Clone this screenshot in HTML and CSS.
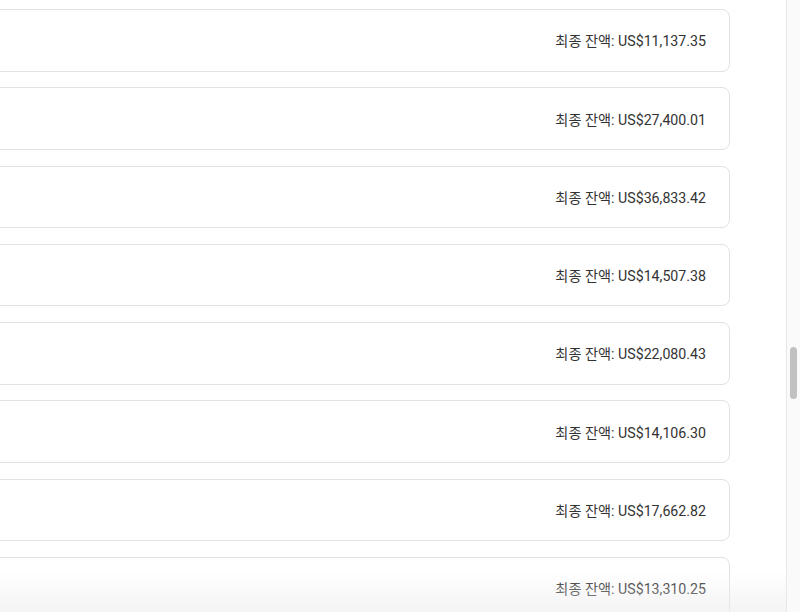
FILE: index.html
```html
<!DOCTYPE html>
<html lang="ko">
<head>
    <meta charset="UTF-8">
    <meta name="viewport" content="width=device-width, initial-scale=1.0">
    <title>최종 잔액</title>
    <link rel="stylesheet" href="styles.css">
</head>
<body>
    <div class="list">
        <div class="card"><span class="balance">최종 잔액: US$11,137.35</span></div>
        <div class="card"><span class="balance">최종 잔액: US$27,400.01</span></div>
        <div class="card"><span class="balance">최종 잔액: US$36,833.42</span></div>
        <div class="card"><span class="balance">최종 잔액: US$14,507.38</span></div>
        <div class="card"><span class="balance">최종 잔액: US$22,080.43</span></div>
        <div class="card"><span class="balance">최종 잔액: US$14,106.30</span></div>
        <div class="card"><span class="balance">최종 잔액: US$17,662.82</span></div>
        <div class="card"><span class="balance">최종 잔액: US$13,310.25</span></div>
    </div>

    <div class="fade"></div>
    <div class="scrollbar">
        <div class="thumb"></div>
    </div>
</body>
</html>
```

FILE: styles.css
```css
html, body {
    margin: 0;
    height: 100%;
    overflow: hidden;
}
body {
    font-family: Roboto, "Noto Sans CJK KR", sans-serif;
    background-color: #ffffff;
    color: #333333;
}
.list {
    display: flex;
    flex-direction: column;
    gap: 15.8px;
    margin-left: -24px;
    margin-right: 70px;
    padding-top: 9px;
}
.card {
    flex: none;
    box-sizing: border-box;
    height: 62.5px;
    display: flex;
    align-items: center;
    justify-content: flex-end;
    padding: 0 23px 0 24px;
    border: 1px solid #e2e2e4;
    border-radius: 8px;
    background-color: #ffffff;
}
.balance {
    font-size: 14.2px;
}
.fade {
    position: fixed;
    left: 0;
    right: 0;
    bottom: 0;
    height: 40px;
    background: linear-gradient(to bottom, rgba(236, 236, 238, 0), rgba(236, 236, 238, 0.6));
    pointer-events: none;
}
.scrollbar {
    position: fixed;
    top: 0;
    right: 0;
    bottom: 0;
    width: 13px;
    background-color: #fafafa;
    border-left: 1px solid #e8e8e8;
}
.thumb {
    position: absolute;
    top: 347px;
    left: 3px;
    width: 7px;
    height: 52px;
    border-radius: 4px;
    background-color: #c1c1c1;
}
```
